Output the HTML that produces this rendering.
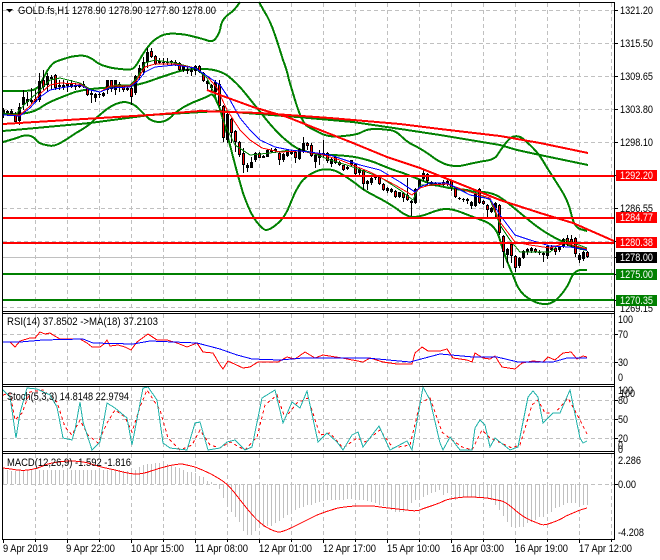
<!DOCTYPE html>
<html><head><meta charset="utf-8"><title>GOLD.fs,H1</title>
<style>
html,body{margin:0;padding:0;background:#fff}
svg{display:block}
text{font-family:"Liberation Sans",sans-serif;font-size:11px;fill:#000}
.w{fill:#fff}
</style></head><body>
<svg width="660" height="560" viewBox="0 0 660 560" xmlns="http://www.w3.org/2000/svg">
<rect width="660" height="560" fill="#fff"/>
<!-- grid -->
<g stroke="#c0c0c0" stroke-width="1" stroke-dasharray="4 3" fill="none" shape-rendering="crispEdges">
<path d="M3 10.5H614M3 43.5H614M3 76.5H614M3 109.5H614M3 142.5H614M3 175.5H614M3 208.5H614M3 241.5H614M3 274.5H614M3 307.5H614"/>
<path d="M3 334.5H614M3 362.5H614M3 400.5H614M3 419.5H614M3 438.5H614M3 484.5H614"/>
<path d="M35.5 3V311M67.5 3V311M99.5 3V311M131.5 3V311M163.5 3V311M195.5 3V311M227.5 3V311M259.5 3V311M291.5 3V311M323.5 3V311M355.5 3V311M387.5 3V311M419.5 3V311M451.5 3V311M483.5 3V311M515.5 3V311M547.5 3V311M579.5 3V311M611.5 3V311"/>
<path d="M35.5 314V384M67.5 314V384M99.5 314V384M131.5 314V384M163.5 314V384M195.5 314V384M227.5 314V384M259.5 314V384M291.5 314V384M323.5 314V384M355.5 314V384M387.5 314V384M419.5 314V384M451.5 314V384M483.5 314V384M515.5 314V384M547.5 314V384M579.5 314V384M611.5 314V384"/>
<path d="M35.5 387V451M67.5 387V451M99.5 387V451M131.5 387V451M163.5 387V451M195.5 387V451M227.5 387V451M259.5 387V451M291.5 387V451M323.5 387V451M355.5 387V451M387.5 387V451M419.5 387V451M451.5 387V451M483.5 387V451M515.5 387V451M547.5 387V451M579.5 387V451M611.5 387V451"/>
<path d="M35.5 454V539M67.5 454V539M99.5 454V539M131.5 454V539M163.5 454V539M195.5 454V539M227.5 454V539M259.5 454V539M291.5 454V539M323.5 454V539M355.5 454V539M387.5 454V539M419.5 454V539M451.5 454V539M483.5 454V539M515.5 454V539M547.5 454V539M579.5 454V539M611.5 454V539"/>
</g>
<!-- price line -->
<path d="M3 257.5H614" stroke="#c0c0c0" stroke-width="1" shape-rendering="crispEdges"/>
<!-- Bollinger and slow MA -->
<g fill="none" stroke="#008000" stroke-width="2" shape-rendering="crispEdges" stroke-linejoin="round">
<path d="M3 91L17 91Q30 91 32 90Q35 90 38 87Q40 85 45 75Q50 65 55 62Q60 60 70 57Q80 55 85 56Q90 57 95 61Q100 65 105 66Q110 68 120 69Q130 70 132 69Q135 68 140 59Q145 50 152 42Q160 35 167 34Q175 33 187 35Q200 38 206 40Q213 43 216 38Q220 33 221 25Q223 18 229 14Q235 10 240 2"/>
<path d="M259 2L264 11Q270 20 275 35Q280 50 283 60Q287 70 289 80Q292 90 295 100Q298 110 301 117Q305 125 307 126Q310 128 320 133Q330 138 343 136Q357 135 362 132Q367 129 375 129Q383 129 389 130Q395 130 401 136Q407 142 413 145Q420 148 430 155Q440 163 448 165Q457 167 465 165Q473 163 484 161Q495 160 498 154Q502 148 505 144Q508 140 512 137Q517 135 522 138Q527 142 533 148Q540 155 546 166Q553 177 560 188Q568 200 571 213Q574 227 580 229L587 231"/>
<path d="M3 114L18 114Q33 113 40 108Q47 103 57 99Q67 95 75 92Q83 90 91 89Q100 88 116 87Q133 87 150 81Q167 75 180 71Q193 68 206 69Q220 70 228 76Q237 83 245 93Q253 103 265 118Q277 133 287 141Q297 150 308 152Q320 155 330 155Q340 155 355 157Q370 160 381 165Q393 170 403 173Q413 177 426 182Q440 187 456 189Q473 192 484 192Q495 193 504 200Q513 207 525 217Q537 227 545 232Q553 237 563 242Q573 248 587 250"/>
<path d="M3 142L10 140Q17 138 22 136Q27 135 31 136Q35 138 37 141Q40 144 46 145Q53 147 58 144Q63 142 76 133Q90 125 93 121Q97 117 107 109Q117 102 125 102Q133 103 138 108Q143 113 147 117Q152 122 159 122Q167 122 174 114Q182 107 194 102Q207 97 210 95Q213 93 216 100Q220 107 223 120Q227 133 232 153Q237 173 243 193Q250 213 256 221Q263 230 266 230Q270 230 277 224Q285 218 291 202Q297 187 303 180Q310 173 320 170Q330 168 338 172Q347 177 355 183Q363 190 375 196Q387 202 397 209Q407 217 413 217Q420 217 430 213Q440 209 446 209Q453 209 463 213Q473 217 484 221Q495 225 499 237Q503 250 507 261Q512 273 516 283Q520 293 528 298Q537 304 544 304Q552 305 560 296Q568 287 571 278Q575 270 581 270L587 270"/>
<polyline points="3,131 90,123 150,115 220,111 297,117 353,122 407,130 440,135 500,145 517,150 540,155 588,165"/>
</g>
<!-- candles -->
<g transform="translate(.5 0)" fill="none" shape-rendering="crispEdges">
<path stroke="#000" stroke-width="1" d="M3 108V118M7 110V116M11 109V116M15 112V124M19 103V125M23 90V110M27 92V106M31 88V104M35 90V103M39 73V102M43 70V90M47 73V92M51 75V90M55 74V90M59 80V90M63 80V90M67 81V92M71 80V88M75 83V90M79 84V88M83 81V88M87 88V96M91 90V103M95 93V102M99 92V98M103 92V97M107 80V94M111 80V92M115 80V95M119 82V92M123 85V92M127 87V91M131 86V105M135 75V95M139 65V80M143 57V75M147 48V68M151 48V58M155 55V65M159 58V64M163 58V65M167 58V65M171 60V66M175 60V66M179 62V71M183 65V72M187 66V74M191 68V76M195 65V75M199 65V73M203 72V82M207 80V90M211 84V92M215 80V96M219 80V107M223 105V142M227 113V143M231 118V143M235 130V152M239 141V157M243 148V173M247 163V172M251 157V168M255 152V162M259 152V158M263 155V158M267 149V157M271 148V153M275 148V153M279 152V165M283 153V162M287 149V157M291 150V155M295 150V163M299 148V160M303 137V153M307 142V150M311 143V157M315 153V168M319 150V165M323 140V157M327 152V163M331 158V167M335 156V164M339 161V166M343 165V171M347 166V170M351 160V166M355 163V175M359 168V175M363 169V190M367 180V190M371 177V185M375 175V180M379 176V185M383 183V191M387 187V193M391 188V193M395 190V198M399 192V198M403 192V202M407 178V201M411 200V216M415 188V204M419 179V188M423 170V181M427 173V185M431 181V185M435 182V186M439 183V186M443 180V186M447 178V186M451 180V191M455 188V198M459 197V200M463 198V202M467 198V204M471 201V209M475 192V207M479 188V204M483 200V205M487 204V217M491 207V213M495 202V217M499 204V235M503 235V268M507 248V263M511 243V263M515 255V272M519 257V268M523 250V259M527 248V255M531 247V253M535 248V253M539 250V255M543 252V262M547 245V259M551 245V251M555 247V255M559 246V252M563 238V248M567 235V246M571 235V247M575 237V257M579 253V263M583 251V261M587 251V258"/>
<path stroke="#000" stroke-width="3" d="M3 110V114M7 111V113M11 111V114M15 115V122M19 107V121M23 97V105M27 99V102M31 100V102M35 99V102M39 81V100M43 80V87M47 76V85M51 77V79M55 75V88M59 85V87M63 85V87M67 84V86M71 84V87M75 85V87M79 85V87M83 84V86M87 88V95M91 93V95M95 94V98M99 94V95M103 93V96M107 80V90M111 80V89M115 80V90M119 84V86M123 85V90M127 88V90M131 88V97M135 76V93M139 68V76M143 62V72M147 52V62M151 51V57M155 56V64M159 61V63M163 62V63M167 62V63M171 61V63M175 62V63M179 63V70M183 66V70M187 69V71M191 70V72M195 66V71M199 66V72M203 73V81M207 81V84M211 85V88M215 82V92M219 84V106M223 106V138M227 114V140M231 119V133M235 131V142M239 142V155M243 153V165M247 165V168M251 162V168M255 153V160M259 153V158M263 156V158M267 150V157M271 150V152M275 149V151M279 153V160M283 154V160M287 150V156M291 152V154M295 152V158M299 149V159M303 143V152M307 143V146M311 145V156M315 155V162M319 153V158M323 153V155M327 153V161M331 159V164M335 157V163M339 162V165M343 165V170M347 167V169M351 160V165M355 164V174M359 169V173M363 170V184M367 181V184M371 178V183M375 176V178M379 177V184M383 184V190M387 188V191M391 189V192M395 191V197M399 192V197M403 193V198M407 195V200M411 201V203M415 189V203M419 180V188M423 173V179M427 174V181M431 182V184M435 183V185M439 183V185M443 182V185M447 181V184M451 181V188M455 188V197M459 198V199M463 199V200M467 199V201M471 202V206M475 193V206M479 189V203M483 201V204M487 205V210M491 208V212M495 203V208M499 205V233M503 236V252M507 249V255M511 244V256M515 256V268M519 258V266M523 251V258M527 249V252M531 248V251M535 249V252M539 252V253M543 253V255M547 246V256M551 247V250M555 248V252M559 247V250M563 239V247M567 238V244M571 239V243M575 238V254M579 255V260M583 252V259M587 252V257"/>
<path stroke="#f00" stroke-width="1" d="M15 116V121M43 81V86M55 76V87M87 89V94M111 81V88M123 86V89M131 89V96M151 52V56M155 57V63M179 64V69M199 67V71M203 74V80M219 85V105M223 107V137M231 120V132M235 132V141M239 143V154M243 154V164M259 154V157M275 150V150M279 154V159M295 153V157M307 144V145M311 146V155M327 154V160M335 158V162M339 163V164M343 166V169M355 165V173M363 171V183M379 178V183M383 185V189M395 192V196M403 194V197M407 196V199M427 175V180M451 182V187M455 189V196M479 190V202M483 202V203M487 206V209M499 206V232M503 237V251M511 245V255M515 257V267M535 250V251M555 249V251M567 239V243M571 240V242M575 239V253M587 253V256"/>
</g>
<!-- MAs -->
<g fill="none" stroke-width="1" shape-rendering="crispEdges">
<polyline stroke="#008000" points="3,113 15,115 25,104 38,92 50,80 60,78 80,83 90,89 100,92 115,85 130,85 137,78 145,63 155,60 175,63 195,68 207,78 215,95 225,125 235,145 250,155 270,153 290,150 310,152 330,160 350,166 380,177 400,190 413,200 420,185 440,186 470,190 490,200 500,225 510,240 520,252 550,252 565,240 587,248"/>
<polyline stroke="#f00" points="3,115 20,115 30,106 40,94 50,85 60,83 80,84 90,90 100,92 110,86 130,86 137,80 145,67 155,64 175,64 195,68 207,76 217,88 227,110 240,130 250,140 262,148 280,152 300,151 320,154 340,160 370,172 395,185 412,195 420,188 430,185 447,184 470,192 490,198 500,222 515,242 530,245 550,248 565,243 587,249"/>
<polyline stroke="#00f" points="3,115 20,116 30,108 40,97 50,90 60,88 80,85 90,90 100,92 110,88 130,87 137,82 145,72 155,67 175,65 195,68 210,78 220,85 230,100 240,118 250,130 260,140 275,147 290,150 310,152 330,155 360,165 380,170 400,182 415,192 420,187 430,183 447,183 470,195 490,199 500,215 515,235 530,240 550,246 570,247 587,250"/>
</g>
<!-- horizontal lines and trend -->
<g fill="none" stroke-width="2" shape-rendering="crispEdges">
<path stroke="#f00" d="M3 176H614M3 218H614M3 243H614"/>
<path stroke="#008000" d="M3 274H614M3 300H614"/>
<polyline stroke="#f00" points="3,124 100,118 150,115 200,111 260,113 330,118 400,124 440,129 500,136 540,143 588,153"/>
<polyline stroke="#f00" points="207,90 220,95 253,107 287,117 320,130 353,143 387,157 420,168 440,176 500,200 540,213 573,223 614,241"/>
</g>
<!-- RSI -->
<g fill="none" stroke-width="1" shape-rendering="crispEdges">
<polyline stroke="#f00" points="3,342 10,342 15,347 20,341 30,338 35,338 40,332 45,334 50,333 53,335 60,339 80,339 87,343 92,347 100,347 104,344 107,340 110,346 118,345 125,347 131,350 137,342 148,334 157,340 167,340 177,343 187,347 197,343 203,352 213,353 220,365 223,369 228,361 243,368 250,367 258,362 278,362 287,357 295,359 305,352 315,358 323,355 342,358 363,362 370,358 383,362 397,364 412,364 415,353 422,347 428,351 440,351 447,349 453,358 467,360 472,362 475,353 483,358 490,359 495,356 502,367 515,369 522,363 533,361 543,362 548,357 555,360 563,353 571,352 577,359 583,356 587,357"/>
<polyline stroke="#00f" points="3,342 20,342 43,340 83,339 93,343 133,344 150,341 197,343 220,349 237,355 252,359 280,360 303,358 367,358 410,362 440,354 473,357 497,357 518,362 553,362 567,358 587,358"/>
<!-- Stoch -->
<polyline stroke="#f00" stroke-dasharray="3 3" points="3,395 10,393 15,420 22,413 30,392 43,390 57,402 65,427 72,435 80,420 88,435 98,443 107,423 115,410 125,417 132,432 140,407 147,390 160,410 168,438 180,450 192,445 200,430 210,445 220,448 230,442 245,450 257,437 265,405 277,395 285,418 297,403 308,398 320,435 330,433 343,448 357,438 365,442 380,430 393,448 410,445 420,403 430,398 442,432 448,437 462,447 472,450 482,430 490,438 512,448 520,445 532,405 538,400 545,413 555,413 568,398 580,420 587,434"/>
<polyline stroke="#20b2aa" points="3,390 10,397 13,417 16,438 20,413 27,388 37,389 50,395 57,407 63,438 72,440 75,430 80,402 83,422 92,450 100,442 107,403 115,408 127,418 132,445 143,388 148,387 157,400 163,443 170,448 187,450 195,423 200,422 208,450 220,448 227,442 235,440 245,450 252,447 262,398 275,390 283,423 292,402 300,408 307,391 318,442 327,433 337,442 343,450 352,435 358,432 363,447 379,426 390,450 407,441 412,450 423,387 430,400 440,443 443,450 450,437 460,450 472,450 475,428 480,420 485,425 490,447 495,438 510,450 518,447 528,397 533,391 538,397 543,423 553,413 560,413 570,390 580,438 583,443 587,441"/>
<!-- MACD histogram -->
<path stroke="#c0c0c0" transform="translate(.5 0)" d="M3 484V468M7 484V470M11 484V471M15 484V471M19 484V470M23 484V470M27 484V470M31 484V470M35 484V470M39 484V470M43 484V470M47 484V470M51 484V470M55 484V470M59 484V470M63 484V470M67 484V470M71 484V470M75 484V470M79 484V470M83 484V470M87 484V470M91 484V470M95 484V470M99 484V470M103 484V470M107 484V470M111 484V470M115 484V470M119 484V470M123 484V471M127 484V471M131 484V472M135 484V470M139 484V467M143 484V465M147 484V464M151 484V464M155 484V463M159 484V463M163 484V463M167 484V464M171 484V466M175 484V467M179 484V468M183 484V470M187 484V472M191 484V472M195 484V473M199 484V476M203 484V477M207 484V481M211 484V482M215 484V484M219 484V489M223 484V498M227 484V503M231 484V512M235 484V517M239 484V522M243 484V531M247 484V535M251 484V535M255 484V531M259 484V528M263 484V527M267 484V526M271 484V526M275 484V523M279 484V521M283 484V518M287 484V515M291 484V513M295 484V510M299 484V508M303 484V507M307 484V505M311 484V505M315 484V503M319 484V502M323 484V501M327 484V500M331 484V500M335 484V500M339 484V500M343 484V500M347 484V499M351 484V499M355 484V499M359 484V500M363 484V500M367 484V501M371 484V502M375 484V503M379 484V505M383 484V506M387 484V508M391 484V510M395 484V512M399 484V512M403 484V512M407 484V510M411 484V503M415 484V500M419 484V498M423 484V497M427 484V495M431 484V493M435 484V492M439 484V490M443 484V495M447 484V493M451 484V495M455 484V500M459 484V498M463 484V497M467 484V497M471 484V497M475 484V498M479 484V498M483 484V498M487 484V498M491 484V500M495 484V505M499 484V510M503 484V516M507 484V522M511 484V527M515 484V528M519 484V527M523 484V527M527 484V523M531 484V522M535 484V520M539 484V517M543 484V517M547 484V514M551 484V512M555 484V508M559 484V507M563 484V505M567 484V503M571 484V503M575 484V503M579 484V505M583 484V505M587 484V505"/>
<path stroke="#f00" d="M3 468L11 469Q20 471 28 470Q37 469 45 465Q53 462 68 461Q83 461 91 464Q100 467 115 470Q130 474 136 474Q143 474 151 471Q160 468 168 466Q177 464 182 464Q187 465 195 467Q203 470 211 474Q220 479 224 482Q228 485 234 492Q240 500 249 511Q258 522 266 527Q275 532 279 532Q283 532 295 526Q307 520 317 515Q327 511 338 508Q350 506 358 506Q367 506 373 506Q380 507 388 508Q397 509 407 510Q417 512 422 509Q428 507 434 505Q440 503 446 500Q453 498 465 497Q477 497 487 498Q497 500 502 501Q507 503 515 510Q523 517 530 520Q537 523 540 524Q543 526 551 523Q560 520 566 516Q573 513 580 510L587 508"/>
</g>
<!-- frames -->
<g stroke="#000" stroke-width="1" fill="none" shape-rendering="crispEdges">
<path d="M2.5 2.5H614.5M2.5 2V539.5M614.5 2V539.5M2 311.5H615M2 313.5H615M2 384.5H615M2 386.5H615M2 451.5H615M2 453.5H615M2 539.5H615"/>
<path d="M615 10.5H618M615 43.5H618M615 76.5H618M615 109.5H618M615 142.5H618M615 175.5H618M615 208.5H618M615 241.5H618M615 257.5H618M615 274.5H618M615 300.5H618M615 334.5H618M615 362.5H618M615 400.5H618M615 419.5H618M615 438.5H618M615 484.5H618"/>
<path d="M3.5 540V543M35.5 540V542M67.5 540V543M99.5 540V542M131.5 540V543M163.5 540V542M195.5 540V543M227.5 540V542M259.5 540V543M291.5 540V542M323.5 540V543M355.5 540V542M387.5 540V543M419.5 540V542M451.5 540V543M483.5 540V542M515.5 540V543M547.5 540V542M579.5 540V543M611.5 540V542"/>
</g>
<polygon points="6,9 13,9 9.5,12.5" fill="#000"/>
<!-- labels -->
<text x="18" y="14" textLength="198" lengthAdjust="spacingAndGlyphs">GOLD.fs,H1  1278.90 1278.90 1277.80 1278.00</text>
<text x="7" y="325" textLength="151" lengthAdjust="spacingAndGlyphs">RSI(14) 37.8502  -&gt;MA(18) 37.2103</text>
<text x="7" y="400" textLength="122" lengthAdjust="spacingAndGlyphs">Stoch(5,3,3) 14.8148 22.9794</text>
<text x="7" y="466" textLength="124" lengthAdjust="spacingAndGlyphs">MACD(12,26,9) -1.592 -1.816</text>
<text x="620" y="14" textLength="33" lengthAdjust="spacingAndGlyphs">1321.20</text>
<text x="620" y="47" textLength="33" lengthAdjust="spacingAndGlyphs">1315.50</text>
<text x="620" y="80" textLength="33" lengthAdjust="spacingAndGlyphs">1309.65</text>
<text x="620" y="113" textLength="33" lengthAdjust="spacingAndGlyphs">1303.80</text>
<text x="620" y="146" textLength="33" lengthAdjust="spacingAndGlyphs">1298.10</text>
<text x="620" y="212" textLength="33" lengthAdjust="spacingAndGlyphs">1286.55</text>
<text x="620" y="312" textLength="33" lengthAdjust="spacingAndGlyphs">1269.15</text>
<g shape-rendering="crispEdges">
<rect x="616" y="170" width="41" height="11" fill="#f00"/>
<rect x="616" y="212" width="41" height="11" fill="#f00"/>
<rect x="616" y="237" width="41" height="11" fill="#f00"/>
<rect x="616" y="252" width="41" height="11" fill="#000"/>
<rect x="616" y="269" width="41" height="11" fill="#008000"/>
<rect x="616" y="295" width="41" height="11" fill="#008000"/>
</g>
<text class="w" x="620" y="179" textLength="33" lengthAdjust="spacingAndGlyphs">1292.20</text>
<text class="w" x="620" y="221" textLength="33" lengthAdjust="spacingAndGlyphs">1284.77</text>
<text class="w" x="620" y="246" textLength="33" lengthAdjust="spacingAndGlyphs">1280.38</text>
<text class="w" x="620" y="261" textLength="33" lengthAdjust="spacingAndGlyphs">1278.00</text>
<text class="w" x="620" y="278" textLength="33" lengthAdjust="spacingAndGlyphs">1275.00</text>
<text class="w" x="620" y="304" textLength="33" lengthAdjust="spacingAndGlyphs">1270.35</text>
<text x="618" y="323" textLength="15" lengthAdjust="spacingAndGlyphs">100</text>
<text x="618" y="338" textLength="10" lengthAdjust="spacingAndGlyphs">70</text>
<text x="618" y="366" textLength="10" lengthAdjust="spacingAndGlyphs">30</text>
<text x="618" y="381" textLength="5" lengthAdjust="spacingAndGlyphs">0</text>
<text x="618" y="394" textLength="15" lengthAdjust="spacingAndGlyphs">100</text>
<text x="620" y="397" textLength="15" lengthAdjust="spacingAndGlyphs">100</text>
<text x="618" y="404" textLength="10" lengthAdjust="spacingAndGlyphs">80</text>
<text x="618" y="423" textLength="10" lengthAdjust="spacingAndGlyphs">50</text>
<text x="618" y="442" textLength="10" lengthAdjust="spacingAndGlyphs">20</text>
<text x="618" y="449" textLength="5" lengthAdjust="spacingAndGlyphs">0</text>
<text x="618" y="453" textLength="5" lengthAdjust="spacingAndGlyphs">0</text>
<text x="618" y="464" textLength="23" lengthAdjust="spacingAndGlyphs">2.286</text>
<text x="618" y="488" textLength="18" lengthAdjust="spacingAndGlyphs">0.00</text>
<text x="618" y="536" textLength="26" lengthAdjust="spacingAndGlyphs">-4.208</text>
<text x="3" y="552" textLength="45" lengthAdjust="spacingAndGlyphs">9 Apr 2019</text>
<text x="66" y="552" textLength="49" lengthAdjust="spacingAndGlyphs">9 Apr 22:00</text>
<text x="131" y="552" textLength="53" lengthAdjust="spacingAndGlyphs">10 Apr 15:00</text>
<text x="195" y="552" textLength="53" lengthAdjust="spacingAndGlyphs">11 Apr 08:00</text>
<text x="259" y="552" textLength="53" lengthAdjust="spacingAndGlyphs">12 Apr 01:00</text>
<text x="323" y="552" textLength="53" lengthAdjust="spacingAndGlyphs">12 Apr 17:00</text>
<text x="387" y="552" textLength="53" lengthAdjust="spacingAndGlyphs">15 Apr 10:00</text>
<text x="451" y="552" textLength="53" lengthAdjust="spacingAndGlyphs">16 Apr 03:00</text>
<text x="515" y="552" textLength="53" lengthAdjust="spacingAndGlyphs">16 Apr 19:00</text>
<text x="579" y="552" textLength="53" lengthAdjust="spacingAndGlyphs">17 Apr 12:00</text>
</svg>
</body></html>
